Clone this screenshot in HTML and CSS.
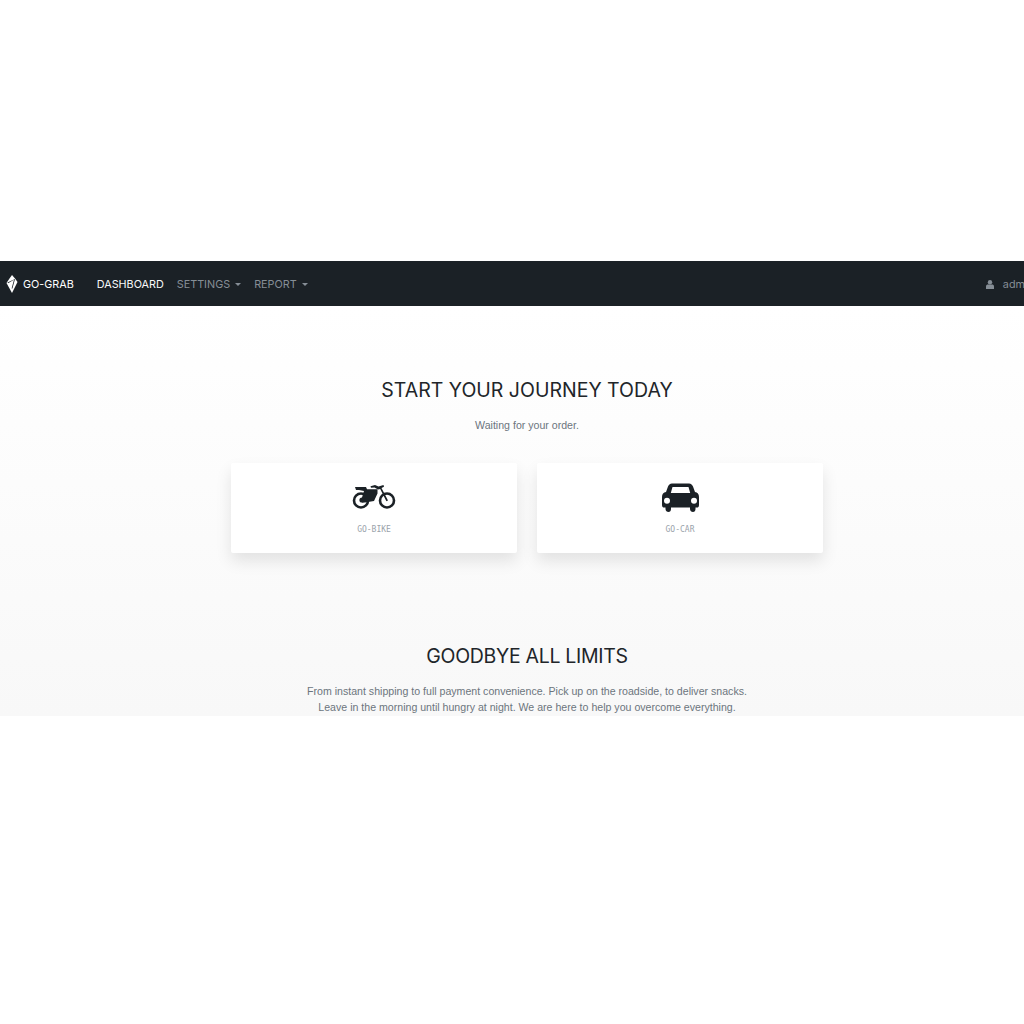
FILE: index.html
```html
<!DOCTYPE html>
<html>
<head>
    <meta charset="utf-8">
    <title>GO-GRAB</title>
    <link rel="stylesheet" href="styles.css">
</head>
<body>
    <div class="page">
        <nav class="navbar">
            <a class="brand">
                <svg class="brand-logo" viewBox="0 0 12 18" width="12" height="18">
                    <path d="M6 0 L9 3.5 L11.5 7 L6 18 L0.5 8 L3.5 3.5 Z" fill="#fff"/>
                    <path d="M2 8.2 L8 4.8 L5.6 13.5 L6.4 13.5 L9 4 L1.5 7.6 Z" fill="#1b2126"/>
                </svg>
                GO-GRAB
            </a>
            <ul class="menu">
                <li class="menu-item active">DASHBOARD</li>
                <li class="menu-item caret">SETTINGS</li>
                <li class="menu-item caret">REPORT</li>
            </ul>
            <div class="user">
                <svg class="user-icon" viewBox="0 0 8 9" width="8" height="9">
                    <circle cx="4" cy="2.2" r="2.2" fill="#868e96"/>
                    <path d="M0 9 V6.4 C0 5 1 4.4 2 4.4 H6 C7 4.4 8 5 8 6.4 V9 Z" fill="#868e96"/>
                </svg>
                admin
            </div>
        </nav>

        <main class="content">
            <section class="start">
                <h2 class="title">START YOUR JOURNEY TODAY</h2>
                <p class="lead">Waiting for your order.</p>
                <div class="cards">
                    <div class="card">
                        <div class="vehicle">
                            <svg viewBox="-1 1 44 25" width="44" height="25">
                                <circle cx="8" cy="16.5" r="7" fill="none" stroke="#1b2126" stroke-width="2.6"/>
                                <circle cx="34" cy="16.5" r="7" fill="none" stroke="#1b2126" stroke-width="2.6"/>
                                <circle cx="9" cy="16" r="2.6" fill="#1b2126"/>
                                <path d="M2 3 H13 L14 5.2 H24.5 V9.5 L21 17 L12 18.4 L9 18.4 L9 13.4 L11 7 L6 6 H3 Z" fill="#1b2126"/>
                                <path d="M17.5 2.2 L22 1 L25.5 2.6 L30.5 1 L31 2.8 L28.5 4 L35 16.5 L33.4 17.3 L27.2 5 L25 5.6 L21.5 3.6 L18 3.8 Z" fill="#1b2126"/>
                            </svg>
                        </div>
                        <span class="card-label">GO-BIKE</span>
                    </div>
                    <div class="card">
                        <div class="vehicle">
                            <svg viewBox="0 0 37 29" width="37" height="29">
                                <path fill-rule="evenodd" d="M10 0.5 H27 C29 0.5 30.5 2 31 3.5 L33 9 C35.5 9.5 37 11 37 14 V22 C37 24 36 24.5 35 24.5 H33.5 V26 C33.5 28 32.5 29 31 29 C29.5 29 28 28 28 26 V24.5 H9 V26 C9 28 8 29 6.5 29 C5 29 3.5 28 3.5 26 V24.5 H2 C1 24.5 0 24 0 22 V14 C0 11 1.5 9.5 4 9 L6 3.5 C6.5 2 8 0.5 10 0.5 Z M10.5 3.9 L8.8 10 H28.2 L26.5 3.9 Z M5 14.7 A3 3 0 1 0 5 20.7 A3 3 0 1 0 5 14.7 Z M32 14.7 A3 3 0 1 0 32 20.7 A3 3 0 1 0 32 14.7 Z" fill="#1b2126"/>
                            </svg>
                        </div>
                        <span class="card-label">GO-CAR</span>
                    </div>
                </div>
            </section>
            <section class="limits">
                <h2 class="title tight">GOODBYE ALL LIMITS</h2>
                <p class="lead">From instant shipping to full payment convenience. Pick up on the roadside, to deliver snacks.<br>Leave in the morning until hungry at night. We are here to help you overcome everything.</p>
            </section>
        </main>
    </div>
</body>
</html>
```

FILE: styles.css
```css
/*page*/
html, body {
    margin: 0;
    overflow: hidden;
    background-color: #fff;
}

body {
    height: 1024px;
    font-family: 'Liberation Sans', sans-serif;
}

.page {
    width: 1054px;
    padding-top: 261px;
}

/*navbar*/
.navbar {
    display: flex;
    align-items: center;
    height: 45px;
    padding: 2px 20px 0 6px;
    background-color: #1b2126;
    box-sizing: border-box;
    font-family: 'Inter', sans-serif;
    font-size: 10.8px;
}

.brand {
    display: flex;
    align-items: center;
    gap: 5px;
    margin-right: 23px;
    color: #fff;
}

.brand-logo {
    margin-top: -2px;
}

.menu {
    display: flex;
    gap: 13px;
    margin: 0;
    padding: 0;
    list-style: none;
}

.menu-item {
    color: #868e96;
}

.menu-item.active {
    color: #f8f9fa;
}

.menu-item.caret::after {
    content: "";
    display: inline-block;
    margin-left: 5px;
    vertical-align: 2px;
    border-top: 3px solid;
    border-left: 3px solid transparent;
    border-right: 3px solid transparent;
}

.user {
    display: flex;
    align-items: center;
    gap: 9px;
    margin-left: auto;
    color: #868e96;
}

/*content*/
.content {
    height: 410px;
    background: linear-gradient(#fff, #f8f8f8);
    text-align: center;
    overflow: hidden;
}

.start {
    padding-top: 70px;
}

.limits {
    padding-top: 89px;
}

.title {
    margin: 0;
    font-family: 'Inter', sans-serif;
    font-size: 19.5px;
    font-weight: 400;
    line-height: 28px;
    color: #212529;
}

.title.tight {
    letter-spacing: -0.3px;
}

.lead {
    margin: 13px 0 0;
    font-size: 10.6px;
    line-height: 16px;
    color: #6c757d;
}

.cards {
    display: flex;
    justify-content: center;
    gap: 20px;
    margin-top: 30px;
}

.card {
    display: flex;
    flex-direction: column;
    align-items: center;
    width: 286px;
    height: 90px;
    padding-top: 19px;
    box-sizing: border-box;
    background-color: #fff;
    box-shadow: 0 8px 16px rgba(0, 0, 0, 0.1);
    border-radius: 2px;
}

.vehicle {
    display: flex;
    align-items: center;
    height: 30px;
}

.card-label {
    margin-top: 13px;
    font-family: 'DejaVu Sans Mono', monospace;
    font-size: 8px;
    color: #9aa3ab;
}
```
